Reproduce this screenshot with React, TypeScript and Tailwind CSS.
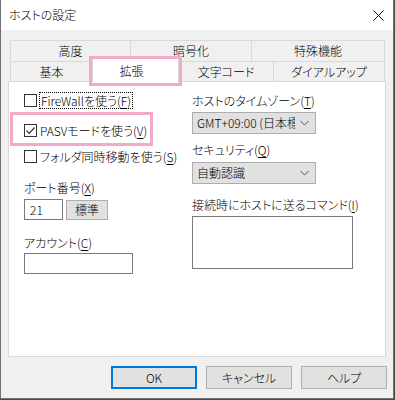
import React from 'react';

const font = "font-['Noto_Sans_CJK_JP',sans-serif] font-light [font-feature-settings:'palt']";

function Check({ checked }: { checked?: boolean }) {
  return (
    <div className="w-[13px] h-[13px] border border-[#333] bg-white flex items-center justify-center shrink-0">
      {checked && (
        <svg width="11" height="11" viewBox="0 0 11 11">
          <polyline points="1.5,5.5 4.2,8.3 9.5,2.5" fill="none" stroke="#333" strokeWidth="1.2" />
        </svg>
      )}
    </div>
  );
}

function Key({ k }: { k: string }) {
  return (
    <>
      (<span className="underline underline-offset-2">{k}</span>)
    </>
  );
}

function Chevron() {
  return (
    <svg width="9" height="6" viewBox="0 0 9 6" className="shrink-0">
      <polyline points="0.5,1 4.5,5 8.5,1" fill="none" stroke="#555" strokeWidth="1" />
    </svg>
  );
}

function Btn({ label, primary }: { label: string; primary?: boolean }) {
  return (
    <div
      className={
        'w-[86px] h-[23px] bg-[#e1e1e1] flex items-center justify-center ' +
        (primary ? 'border-2 border-[#0078d7]' : 'border border-[#adadad]')
      }
    >
      {label}
    </div>
  );
}

export default function App() {
  return (
    <div className={`w-[395px] h-[400px] bg-[#4a4a4a] text-[12px] leading-[16px] text-black ${font}`}>
      <div className="w-[394px] h-[399px] bg-[#f0f0f0] border-l border-r border-b border-[#707070] flex flex-col">
        {/* title bar */}
        <div className="h-[30px] bg-white flex items-center justify-between pl-[8px] pr-[8px] shrink-0">
          <span>ホストの設定</span>
          <svg width="11" height="11" viewBox="0 0 11 11" className="mr-[1px]">
            <line x1="0.5" y1="0.5" x2="10.5" y2="10.5" stroke="#111" strokeWidth="1" />
            <line x1="10.5" y1="0.5" x2="0.5" y2="10.5" stroke="#111" strokeWidth="1" />
          </svg>
        </div>

        <div className="pl-[7px] pt-[10px] flex flex-col">
          {/* tabs */}
          <div className="ml-[2px] w-[375px] flex flex-col">
            <div className="flex h-[21px]">
              <div className="w-[120px] border-t border-l border-[#d9d9d9] flex items-center justify-center">高度</div>
              <div className="w-[121px] border-t border-l border-[#d9d9d9] flex items-center justify-center">暗号化</div>
              <div className="w-[134px] border-t border-l border-r border-[#d9d9d9] flex items-center justify-center">特殊機能</div>
            </div>
            <div className="flex h-[20px]">
              <div className="w-[82px] border-t border-l border-[#d9d9d9] flex items-center justify-center">基本</div>
              <div className="relative z-10 w-[87px] h-[24px] -mt-[3px] bg-white border-t border-l border-r border-[#d9d9d9] flex items-center justify-center pr-[8px]">
                拡張
                <div className="absolute left-[-4px] top-[-3px] w-[93px] h-[30px] border-[3px] border-[#f3a9c8]" />
              </div>
              <div className="w-[94px] border-t border-[#d9d9d9] flex items-center justify-center">文字コード</div>
              <div className="w-[112px] border-t border-l border-r border-[#d9d9d9] flex items-center justify-center">ダイアルアップ</div>
            </div>
          </div>

          {/* panel */}
          <div className="w-[378px] h-[276px] bg-white border border-[#d9d9d9] flex pl-[15px]">
            <div className="w-[168px] flex flex-col">
              <div className="mt-[10px] h-[17px] flex items-center">
                <Check />
                <span className="ml-[2px] px-[1px] h-[17px] border border-dotted border-black flex items-center">
                  FireWallを使う<Key k="F" />
                </span>
              </div>
              <div className="relative mt-[13px] h-[17px] flex items-center">
                <Check checked />
                <span className="ml-[3px]">
                  PASVモードを使う<Key k="V" />
                </span>
                <div className="absolute left-[-14px] top-[-10px] w-[143px] h-[34px] border-[3px] border-[#f3a9c8]" />
              </div>
              <div className="mt-[9px] h-[17px] flex items-center">
                <Check />
                <span className="ml-[3px]">
                  フォルダ同時移動を使う<Key k="S" />
                </span>
              </div>
              <div className="mt-[15px] h-[16px]">
                ポート番号<Key k="X" />
              </div>
              <div className="mt-[3px] flex items-center gap-[3px]">
                <div className="w-[39px] h-[21px] border border-[#7a7a7a] flex items-center pl-[5px]">21</div>
                <div className="w-[42px] h-[20px] bg-[#e1e1e1] border border-[#adadad] flex items-center justify-center">標準</div>
              </div>
              <div className="mt-[15px] h-[16px]">
                アカウント<Key k="C" />
              </div>
              <div className="mt-[2px] w-[109px] h-[21px] border border-[#7a7a7a]" />
            </div>

            <div className="flex flex-col">
              <div className="mt-[11px] h-[16px]">
                ホストのタイムゾーン<Key k="T" />
              </div>
              <div className="mt-[3px] w-[124px] h-[22px] bg-[#e1e1e1] border border-[#adadad] flex items-center pl-[4px] pr-[6px] gap-[5px]">
                <span className="flex-1 overflow-hidden whitespace-nowrap">GMT+09:00 (日本標準時)</span>
                <Chevron />
              </div>
              <div className="mt-[8px] h-[16px]">
                セキュリティ<Key k="Q" />
              </div>
              <div className="mt-[4px] w-[124px] h-[22px] bg-[#e1e1e1] border border-[#adadad] flex items-center pl-[4px] pr-[6px] gap-[5px]">
                <span className="flex-1 overflow-hidden whitespace-nowrap">自動認識</span>
                <Chevron />
              </div>
              <div className="mt-[13px] h-[16px]">
                接続時にホストに送るコマンド<Key k="I" />
              </div>
              <div className="mt-[3px] w-[161px] h-[53px] border border-[#7a7a7a]" />
            </div>
          </div>

          {/* buttons */}
          <div className="mt-[9px] flex justify-end gap-[9px] pr-[6px]">
            <Btn label="OK" primary />
            <Btn label="キャンセル" />
            <Btn label="ヘルプ" />
          </div>
        </div>
      </div>
    </div>
  );
}
